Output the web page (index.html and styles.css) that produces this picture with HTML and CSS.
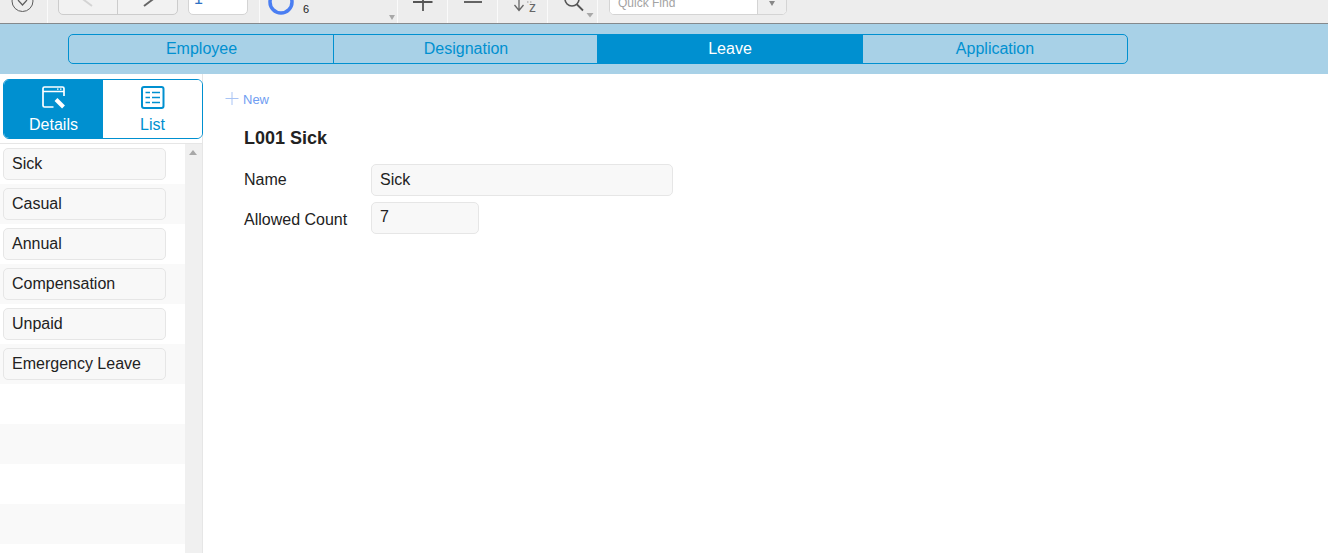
FILE: index.html
```html
<!DOCTYPE html>
<html lang="en">
<head>
<meta charset="utf-8">
<title>Leave</title>
<link rel="stylesheet" href="styles.css">
</head>
<body>
<header class="toolbar">
  <div class="tool tool-menu">
    <svg class="icon" width="47" height="23" viewBox="0 0 47 23"><circle cx="22.500" cy="1" r="10.500" fill="none" stroke="#5c5c5c"/><path d="M18 0l4.500 5 4.500-5" fill="none" stroke="#5c5c5c" stroke-width="1.200"/></svg>
  </div>
  <div class="tool tool-pager">
    <div class="pager">
      <div class="pager-btn pager-first"><svg width="58" height="15" viewBox="0 0 58 15"><path d="M33 -5l-8 7 8 6" fill="none" stroke="#d4d4d4" stroke-width="2"/></svg></div>
      <div class="pager-btn"><svg width="59" height="15" viewBox="0 0 59 15"><path d="M26 -5l8 7-8 6" fill="none" stroke="#666" stroke-width="2"/></svg></div>
    </div>
    <div class="page-input">1</div>
  </div>
  <div class="tool tool-layout">
    <svg class="ring" width="30" height="23" viewBox="0 0 30 23"><circle cx="14" cy="2" r="11" fill="none" stroke="#4a7ef2" stroke-width="3.500"/></svg>
    <span class="count">6</span>
    <span class="tri tri-layout"></span>
  </div>
  <div class="tool tool-icon">
    <svg width="49" height="23" viewBox="0 0 49 23"><path d="M15 2h19.500M25 -6v17" fill="none" stroke="#555" stroke-width="1.800"/></svg>
  </div>
  <div class="tool tool-icon">
    <svg width="49" height="23" viewBox="0 0 49 23"><path d="M16 2h18" fill="none" stroke="#555" stroke-width="1.800"/></svg>
  </div>
  <div class="tool tool-icon tool-sort">
    <svg class="sort-icon" width="15" height="23" viewBox="0 0 15 23"><path d="M6 -1v11M1.500 5l4.500 5.500 4.500-5.500" fill="none" stroke="#666" stroke-width="1.300"/><path d="M14 2h6" stroke="#b5b5b5" stroke-width="1.500" stroke-dasharray="1.500 1.500"/></svg>
    <span class="sort-z">z</span>
  </div>
  <div class="tool tool-icon tool-find">
    <svg width="49" height="23" viewBox="0 0 49 23"><circle cx="24" cy="-1" r="7" fill="none" stroke="#555" stroke-width="1.600"/><path d="M28.500 4l6.500 6.500" stroke="#555" stroke-width="1.800"/><path d="M38.500 13h7l-3.500 4.500z" fill="#a8a8a8"/></svg>
  </div>
  <div class="quick">
    <div class="quick-input">Quick Find</div>
    <div class="quick-btn"><span class="tri tri-dark"></span></div>
  </div>
</header>

<nav class="band">
  <div class="tabs">
    <div class="tab tab-nudge">Employee</div>
    <div class="tab tab-nudge">Designation</div>
    <div class="tab tab-on">Leave</div>
    <div class="tab">Application</div>
  </div>
</nav>

<div class="content">
  <aside class="side">
    <div class="seg">
      <div class="seg-item seg-on">
        <svg width="26" height="24" viewBox="0 0 26 24"><path d="M23 11V3.500a1.500 1.500 0 0 0-1.500-1.500H3.500a1.500 1.500 0 0 0-1.500 1.500v17a1.500 1.500 0 0 0 1.500 1.500h9M2 6.500h21" fill="none" stroke="#fff" stroke-width="1.700"/><path d="M16 4.200h1.500M19 4.200h1.500" stroke="#fff" stroke-width="1.300"/><path d="M15 14.500l7.500 7.500" stroke="#fff" stroke-width="4"/></svg>
        <span>Details</span>
      </div>
      <div class="seg-item">
        <svg width="26" height="24" viewBox="0 0 26 24"><rect x="2" y="2" width="21.500" height="21" rx="2" fill="none" stroke="#0090d0" stroke-width="2"/><path d="M5.500 7.500H10M12 7.500h8M5.500 12.500H10M12 12.500h8M5.500 17.500H10M12 17.500h8" stroke="#0090d0" stroke-width="1.300"/></svg>
        <span>List</span>
      </div>
    </div>
    <div class="list-wrap">
      <div class="list">
        <div class="row"><div class="pill">Sick</div></div>
        <div class="row"><div class="pill">Casual</div></div>
        <div class="row"><div class="pill">Annual</div></div>
        <div class="row"><div class="pill">Compensation</div></div>
        <div class="row"><div class="pill">Unpaid</div></div>
        <div class="row"><div class="pill">Emergency Leave</div></div>
        <div class="row"></div>
        <div class="row"></div>
        <div class="row"></div>
        <div class="row"></div>
      </div>
      <div class="scroll"><span class="scroll-up"></span></div>
    </div>
  </aside>
  <main class="main">
    <div class="new">
      <svg width="14" height="14" viewBox="0 0 14 14"><path d="M7 0v13M0.500 6.500h13" stroke="#a9c4f5" stroke-width="1"/></svg>
      <span>New</span>
    </div>
    <h1 class="title">L001 Sick</h1>
    <div class="form">
      <label class="lbl">Name</label>
      <div class="field field-wide">Sick</div>
      <label class="lbl lbl-low">Allowed Count</label>
      <div class="field field-short">7</div>
    </div>
  </main>
</div>
</body>
</html>
```
FILE: styles.css
```css
* { box-sizing: border-box; }
html, body { margin: 0; height: 100%; overflow: hidden; }
body { font-family: "Liberation Sans", Arial, sans-serif; font-size: 16px; color: #222; background: #fff; display: flex; flex-direction: column; }

.toolbar { height: 24px; flex: none; display: flex; overflow: hidden; background: #ededed; border-bottom: 1px solid #85898c; }
.tool { height: 23px; flex: none; display: flex; align-items: flex-end; border-right: 1px solid #fafafa; }
.icon { display: block; }
.tool-menu { width: 48px; }
.tool-pager { width: 212px; padding: 0 0 8px 10px; gap: 10px; }
.pager { width: 120px; height: 30px; display: flex; align-items: flex-end; border: 1px solid #ccc; border-radius: 5px; background: #f2f2f2; }
.pager-btn { flex: 1; height: 15px; }
.pager-first { flex: none; width: 58px; }
.pager-btn svg { display: block; margin-top: -1px; overflow: hidden; }
.pager-btn + .pager-btn { border-left: 1px solid #ccc; }
.page-input { width: 60px; height: 30px; line-height: 26px; padding-left: 5px; background: #fff; border: 1px solid #d4d4d4; border-radius: 5px; color: #2f72c4; font-size: 16px; }
.tool-layout { width: 138px; padding-left: 7px; }
.ring { display: block; }
.count { font-size: 11px; line-height: 12px; margin: 0 0 8px 6px; color: #222; }
.tri { display: block; width: 0; height: 0; border-left: 3.5px solid transparent; border-right: 3.5px solid transparent; border-top: 5px solid #a8a8a8; }
.tri-dark { border-top-color: #888; }
.tri-layout { margin: 0 0 3px 80px; }
.tool-icon { width: 50px; }
.tool-sort { padding: 0 0 3px 15px; gap: 1px; }
.sort-icon { margin-bottom: -3px; overflow: visible; }
.sort-z { font-size: 14px; line-height: 14px; color: #666; margin-bottom: 6px; }
.quick { width: 178px; height: 30px; margin: -15px 0 0 11px; display: flex; background: #fff; border: 1px solid #d4d4d4; border-radius: 5px; overflow: hidden; }
.quick-input { width: 147px; padding: 2px 0 0 8px; font-size: 12px; line-height: 30px; color: #a3a3a3; background: #fff; }
.quick-btn { flex: 1; background: #efefef; border-left: 1px solid #d4d4d4; display: flex; justify-content: center; padding-top: 15px; }

.band { height: 50px; flex: none; background: #a8d1e7; padding: 10px 0 0 68px; }
.tabs { width: 1060px; height: 30px; display: grid; grid-template-columns: 264px 264px 265px 265px; border: 1px solid #0090d0; border-radius: 5px; overflow: hidden; }
.tab { text-align: center; line-height: 28px; font-size: 16px; color: #0090d0; }
.tab + .tab { border-left: 1px solid #0090d0; }
.tab-nudge { padding-left: 1px; }
.tab-on { background: #0090d0; color: #fff; }

.content { flex: 1; min-height: 0; display: flex; }
.side { width: 203px; flex: none; display: flex; flex-direction: column; padding-top: 5px; min-height: 0; border-right: 1px solid #e6e6e6; }
.seg { width: 200px; height: 60px; margin-left: 3px; flex: none; display: flex; border: 1px solid #0090d0; border-radius: 6px; overflow: hidden; position: relative; z-index: 1; margin-right: -1px; }
.seg-item { flex: 1; display: flex; flex-direction: column; align-items: center; color: #0090d0; font-size: 16px; padding-top: 5px; background: #fff; }
.seg-item span { line-height: 18px; margin-top: 7px; }
.seg-on { background: #0090d0; color: #fff; }
.list-wrap { flex: 1; min-height: 0; margin-top: 4px; display: flex; overflow: hidden; border-top: 1px solid #e6e6e6; }
.list { width: 185px; flex: none; }
.row { height: 40px; padding: 4px 0 0 3px; }
.row:nth-child(even) { background: #f9f9f9; }
.pill { width: 163px; height: 32px; line-height: 30px; padding-left: 8px; font-size: 16px; background: #f8f8f8; border: 1px solid #e6e6e6; border-radius: 5px; color: #222; }
.scroll { flex: 1; background: #f0f0f0; display: flex; justify-content: center; padding-top: 6px; }
.scroll-up { display: block; width: 0; height: 0; margin-right: 1px; border-left: 4px solid transparent; border-right: 4px solid transparent; border-bottom: 5px solid #a8a8a8; }

.main { flex: 1; padding: 18px 0 0 22px; min-width: 0; }
.new { display: flex; align-items: center; gap: 4px; height: 14px; font-size: 13px; color: #6f9df2; }
.new svg { display: block; }
.title { margin: 21px 0 0 19px; font-size: 18px; line-height: 22px; font-weight: bold; color: #222; }
.form { margin: 15px 0 0 19px; display: grid; grid-template-columns: 127px auto; grid-auto-rows: 32px; row-gap: 6px; align-items: center; justify-items: start; }
.lbl { font-size: 16px; line-height: 32px; color: #222; }
.lbl-low { padding-top: 4px; }
.field { height: 32px; line-height: 30px; padding-left: 8px; background: #f8f8f8; border: 1px solid #e6e6e6; border-radius: 5px; font-size: 16px; color: #222; }
.field-wide { width: 302px; }
.field-short { width: 108px; line-height: 28px; }
```
